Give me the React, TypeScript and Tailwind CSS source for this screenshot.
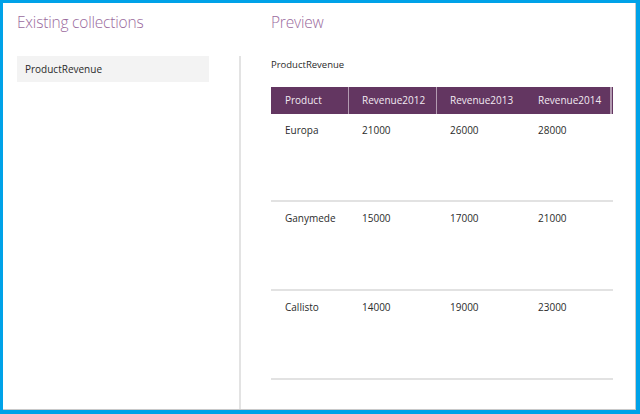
const rows = [
  { product: "Europa", r2012: "21000", r2013: "26000", r2014: "28000", h: "h-[88px]" },
  { product: "Ganymede", r2012: "15000", r2013: "17000", r2014: "21000", h: "h-[89px]" },
  { product: "Callisto", r2012: "14000", r2013: "19000", r2014: "23000", h: "h-[89px]" },
];

const font = { fontFamily: '"Open Sans", "Noto Sans", sans-serif' };

export default function App() {
  return (
    <div
      className="w-[640px] h-[414px] border-l-[3px] border-t-[3px] border-r-[4px] border-b-[4px] border-[#00a2e8] bg-white"
      style={font}
    >
      <div className="h-full flex flex-col border-r border-b border-[#c9c9c9]">
        {/* titles */}
        <div className="flex h-[53px] shrink-0">
          <div className="w-[238px] pl-[14px] pt-[8px] text-[15.5px] font-light text-[#9a6a9d] tracking-[-0.2px]">
            Existing collections
          </div>
          <div className="pl-[30px] pt-[8px] text-[15.5px] font-light text-[#9a6a9d] tracking-[-0.2px]">
            Preview
          </div>
        </div>

        {/* body */}
        <div className="flex flex-1 min-h-0">
          <div className="w-[238px] border-r-2 border-[#e3e3e3] pl-[14px]">
            <div className="w-[192px] h-[26px] bg-[#f3f3f3] flex items-center pl-[8px] text-[10px] text-[#2b2b2b]">
              ProductRevenue
            </div>
          </div>

          <div className="flex-1 pl-[30px]">
            <div className="h-[31px] pt-[2px] text-[9.5px] text-[#2b2b2b]">ProductRevenue</div>
            <div className="w-[342px]">
              <div className="grid grid-cols-[78px_88px_88px_88px] h-[27px] bg-[#633661] text-[10px] text-[#f2eaf1]">
                <div className="flex items-center pl-[14px] border-r border-[#b49cb2]">Product</div>
                <div className="flex items-center pl-[13px] border-r border-[#b49cb2]">Revenue2012</div>
                <div className="flex items-center pl-[13px]">Revenue2013</div>
                <div className="flex items-center pl-[13px] border-r-[2px] border-[#b49cb2] mr-[1px]">Revenue2014</div>
              </div>
              {rows.map((r) => (
                <div
                  key={r.product}
                  className={`grid grid-cols-[78px_88px_88px_88px] ${r.h} border-b-2 border-[#e2e2e2] pt-[9px] text-[10px] text-[#2b2b2b]`}
                >
                  <div className="pl-[14px]">{r.product}</div>
                  <div className="pl-[13px]">{r.r2012}</div>
                  <div className="pl-[13px]">{r.r2013}</div>
                  <div className="pl-[13px]">{r.r2014}</div>
                </div>
              ))}
            </div>
          </div>
        </div>
      </div>
    </div>
  );
}
